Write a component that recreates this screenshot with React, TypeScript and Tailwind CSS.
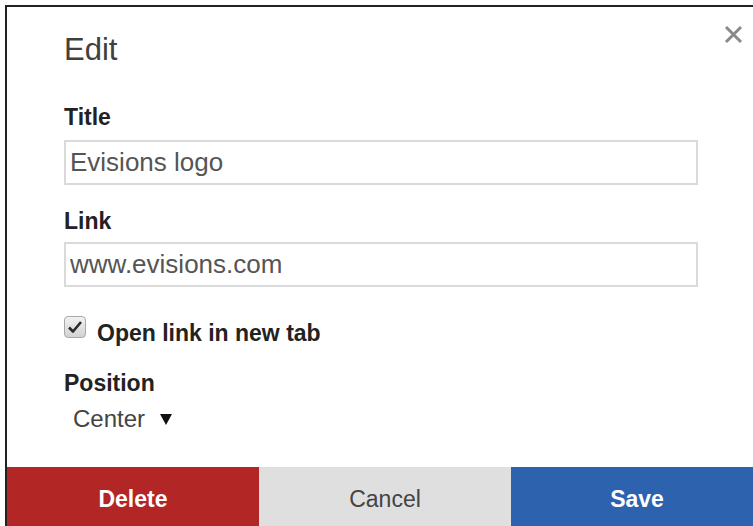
import { useState } from "react";

function CloseIcon() {
  return (
    <svg width="19" height="19" viewBox="0 0 19 19" fill="none">
      <path d="M2 2L17 17M17 2L2 17" stroke="#8a8a8a" strokeWidth="3" strokeLinecap="butt" />
    </svg>
  );
}

function CheckBox({ checked, onToggle }: { checked: boolean; onToggle: () => void }) {
  return (
    <button
      type="button"
      onClick={onToggle}
      className="flex h-[22px] w-[22px] shrink-0 items-center justify-center rounded-[4px] border border-[#a9a9a9] bg-gradient-to-b from-[#f2f2f2] to-[#d2d2d2]"
    >
      {checked ? (
        <svg width="16" height="14" viewBox="0 0 16 14" fill="none">
          <path d="M2 7.5L6 11.5L14 2" stroke="#2b2b2b" strokeWidth="2.6" strokeLinejoin="round" />
        </svg>
      ) : null}
    </button>
  );
}

export default function App() {
  const [title, setTitle] = useState("Evisions logo");
  const [link, setLink] = useState("www.evisions.com");
  const [newTab, setNewTab] = useState(true);

  return (
    <div className="h-[526px] w-[753px] overflow-hidden bg-white pl-[5px] pt-[5px] font-['Liberation_Sans',Arial,sans-serif]">
      <div className="relative w-[760px] border-2 border-[#222]">
        <button type="button" className="absolute left-[717px] top-[18px]">
          <CloseIcon />
        </button>

        <div className="pl-[57px]">
          <h2 className="mt-[27px] text-[31px] leading-none text-[#404040]">Edit</h2>

          <label className="mt-[41px] block text-[23px] font-bold leading-none text-[#222]">Title</label>
          <input
            className="mt-[11px] block h-[45px] w-[634px] border-2 border-[#dadada] px-[4px] text-[26px] text-[#555] outline-none"
            value={title}
            onChange={(event) => setTitle(event.target.value)}
          />

          <label className="mt-[25px] block text-[23px] font-bold leading-none text-[#222]">Link</label>
          <input
            className="mt-[9px] block h-[45px] w-[634px] border-2 border-[#dadada] px-[4px] text-[26px] text-[#555] outline-none"
            value={link}
            onChange={(event) => setLink(event.target.value)}
          />

          <div className="mt-[29px] flex items-start gap-[11px]">
            <CheckBox checked={newTab} onToggle={() => setNewTab((value) => !value)} />
            <span className="mt-[6px] text-[23px] font-bold leading-none text-[#222]">Open link in new tab</span>
          </div>

          <div className="mt-[27px] text-[23px] font-bold leading-none text-[#222]">Position</div>
          <div className="mt-[12px] flex items-center pl-[9px] text-[24px] leading-none text-[#444]">
            <span>Center</span>
            <svg className="ml-[15px]" width="12" height="11" viewBox="0 0 12 11">
              <path d="M0 0H12L6 11Z" fill="#111" />
            </svg>
          </div>
        </div>

        <div className="mt-[36px] grid h-[64px] grid-cols-3 text-[23px] leading-none">
          <button type="button" className="bg-[#b32626] font-bold text-white">Delete</button>
          <button type="button" className="bg-[#dfdfdf] text-[#444]">Cancel</button>
          <button type="button" className="bg-[#2c62ae] font-bold text-white">Save</button>
        </div>
      </div>
    </div>
  );
}
